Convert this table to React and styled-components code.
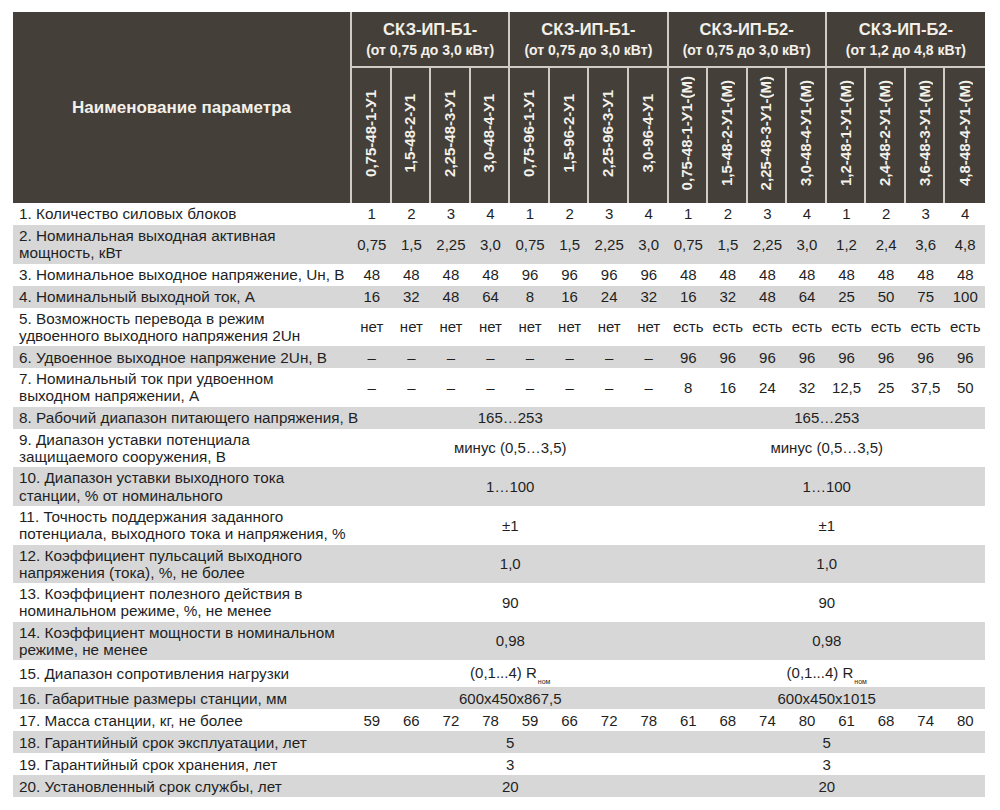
import React from "react";
import styled, { createGlobalStyle } from "styled-components";

const GlobalStyle = createGlobalStyle`
    body {
        margin: 0;
        background: #ffffff;
        font-family: "Liberation Sans", Arial, sans-serif;
    }
`;

const groups = [
    {
        title: "СКЗ-ИП-Б1-",
        range: "(от 0,75 до 3,0 кВт)",
        models: ["0,75-48-1-У1", "1,5-48-2-У1", "2,25-48-3-У1", "3,0-48-4-У1"],
    },
    {
        title: "СКЗ-ИП-Б1-",
        range: "(от 0,75 до 3,0 кВт)",
        models: ["0,75-96-1-У1", "1,5-96-2-У1", "2,25-96-3-У1", "3,0-96-4-У1"],
    },
    {
        title: "СКЗ-ИП-Б2-",
        range: "(от 0,75 до 3,0 кВт)",
        models: [
            "0,75-48-1-У1-(М)",
            "1,5-48-2-У1-(М)",
            "2,25-48-3-У1-(М)",
            "3,0-48-4-У1-(М)",
        ],
    },
    {
        title: "СКЗ-ИП-Б2-",
        range: "(от 1,2 до 4,8 кВт)",
        models: [
            "1,2-48-1-У1-(М)",
            "2,4-48-2-У1-(М)",
            "3,6-48-3-У1-(М)",
            "4,8-48-4-У1-(М)",
        ],
    },
];

const dash = "–";
const rep = (v, n) => Array(n).fill(v);

const rows = [
    { label: ["1. Количество силовых блоков"], values: [...rep(["1", "2", "3", "4"], 4).flat()] },
    {
        label: ["2. Номинальная выходная активная", "мощность, кВт"],
        values: [
            ...rep(["0,75", "1,5", "2,25", "3,0"], 3).flat(),
            "1,2", "2,4", "3,6", "4,8",
        ],
    },
    {
        label: ["3. Номинальное выходное напряжение, Uн, В"],
        values: [...rep("48", 4), ...rep("96", 4), ...rep("48", 8)],
    },
    {
        label: ["4. Номинальный выходной ток, А"],
        values: ["16", "32", "48", "64", "8", "16", "24", "32", "16", "32", "48", "64", "25", "50", "75", "100"],
    },
    {
        label: ["5. Возможность перевода в режим", "удвоенного выходного напряжения 2Uн"],
        values: [...rep("нет", 8), ...rep("есть", 8)],
    },
    {
        label: ["6. Удвоенное выходное напряжение 2Uн, В"],
        values: [...rep(dash, 8), ...rep("96", 8)],
    },
    {
        label: ["7. Номинальный ток при удвоенном", "выходном напряжении, А"],
        values: [...rep(dash, 8), "8", "16", "24", "32", "12,5", "25", "37,5", "50"],
    },
    { label: ["8. Рабочий диапазон питающего напряжения, В"], split: ["165…253", "165…253"] },
    {
        label: ["9. Диапазон уставки потенциала", "защищаемого сооружения, В"],
        split: ["минус (0,5…3,5)", "минус (0,5…3,5)"],
    },
    {
        label: ["10. Диапазон уставки выходного тока", "станции, % от номинального"],
        split: ["1…100", "1…100"],
    },
    {
        label: ["11. Точность поддержания заданного", "потенциала, выходного тока и напряжения, %"],
        split: ["±1", "±1"],
    },
    {
        label: ["12. Коэффициент пульсаций выходного", "напряжения (тока), %, не более"],
        split: ["1,0", "1,0"],
    },
    {
        label: ["13. Коэффициент полезного действия в", "номинальном режиме, %, не менее"],
        split: ["90", "90"],
    },
    {
        label: ["14. Коэффициент мощности в номинальном", "режиме, не менее"],
        split: ["0,98", "0,98"],
    },
    { label: ["15. Диапазон сопротивления нагрузки"], split: ["R", "R"], resist: true },
    {
        label: ["16. Габаритные размеры станции, мм"],
        split: ["600x450x867,5", "600x450x1015"],
    },
    {
        label: ["17. Масса станции, кг, не более"],
        values: [
            ...rep(["59", "66", "72", "78"], 2).flat(),
            ...rep(["61", "68", "74", "80"], 2).flat(),
        ],
    },
    { label: ["18. Гарантийный срок эксплуатации, лет"], split: ["5", "5"] },
    { label: ["19. Гарантийный срок хранения, лет"], split: ["3", "3"] },
    { label: ["20. Установленный срок службы, лет"], split: ["20", "20"] },
];

export default function App() {
    return (
        <Page>
            <GlobalStyle />
            <Table>
                <colgroup>
                    <col style={{ width: 339 }} />
                    {rep(0, 16).map((_, i) => (
                        <col key={i} />
                    ))}
                </colgroup>
                <thead>
                    <tr>
                        <NameHead rowSpan={2}>Наименование параметра</NameHead>
                        {groups.map((g, i) => (
                            <GroupHead key={i} colSpan={4} $last={i === groups.length - 1}>
                                <GroupTitle>{g.title}</GroupTitle>
                                <GroupRange>{g.range}</GroupRange>
                            </GroupHead>
                        ))}
                    </tr>
                    <tr>
                        {groups.map((g, gi) =>
                            g.models.map((m, mi) => (
                                <ModelHead
                                    key={`${gi}-${mi}`}
                                    $last={gi === groups.length - 1 && mi === 3}
                                >
                                    <Vertical>{m}</Vertical>
                                </ModelHead>
                            ))
                        )}
                    </tr>
                </thead>
                <tbody>
                    {rows.map((r, i) => (
                        <Row key={i} $grey={i % 2 === 1} $tall={r.resist}>
                            <Label>
                                {r.label.map((line, j) => (
                                    <React.Fragment key={j}>
                                        {j > 0 && <br />}
                                        {line}
                                    </React.Fragment>
                                ))}
                            </Label>
                            {r.values &&
                                r.values.map((v, j) => <Value key={j}>{v}</Value>)}
                            {r.split &&
                                r.split.map((v, j) => (
                                    <Value key={j} colSpan={8}>
                                        {r.resist ? (
                                            <>
                                                (0,1...4) R<Sub>ном</Sub>
                                            </>
                                        ) : (
                                            v
                                        )}
                                    </Value>
                                ))}
                        </Row>
                    ))}
                </tbody>
            </Table>
        </Page>
    );
}

const Page = styled.div`
    padding: 12px 0 0 13px;
`;

const Table = styled.table`
    width: 972px;
    table-layout: fixed;
    border-collapse: separate;
    border-spacing: 0;
    color: #1f1f1f;
`;

const headBase = `
    background: #443f39;
    color: #f3f0ea;
    font-weight: 700;
    padding: 0;
    text-align: center;
    vertical-align: middle;
`;

const NameHead = styled.th`
    ${headBase}
    font-size: 17px;
    border-right: 2px solid #cfcbc5;
`;

const GroupHead = styled.th`
    ${headBase}
    height: 54px;
    border-bottom: 2px solid #cfcbc5;
    border-right: ${(p) => (p.$last ? "none" : "2px solid #cfcbc5")};
`;

const GroupTitle = styled.div`
    font-size: 16.5px;
    line-height: 22px;
`;

const GroupRange = styled.div`
    font-size: 14px;
    line-height: 20px;
`;

const ModelHead = styled.th`
    ${headBase}
    height: 135px;
    border-right: ${(p) => (p.$last ? "none" : "2px solid #cfcbc5")};
`;

const Vertical = styled.span`
    display: inline-block;
    writing-mode: vertical-rl;
    transform: rotate(180deg);
    font-size: 15px;
    line-height: 16px;
    white-space: nowrap;
`;

const Row = styled.tr`
    background: ${(p) => (p.$grey ? "#d7d7d7" : "#ffffff")};
    td {
        height: ${(p) => (p.$tall ? "23px" : "18px")};
    }
`;

const Label = styled.td`
    font-size: 15.3px;
    line-height: 17.3px;
    padding: 2px 0 2px 6px;
    white-space: nowrap;
    vertical-align: middle;
`;

const Value = styled.td`
    font-size: 15px;
    line-height: 17.3px;
    padding: 2px 0;
    text-align: center;
    vertical-align: middle;
    white-space: nowrap;
`;

const Sub = styled.span`
    font-size: 7px;
    position: relative;
    top: 6px;
    margin-left: 1px;
`;
